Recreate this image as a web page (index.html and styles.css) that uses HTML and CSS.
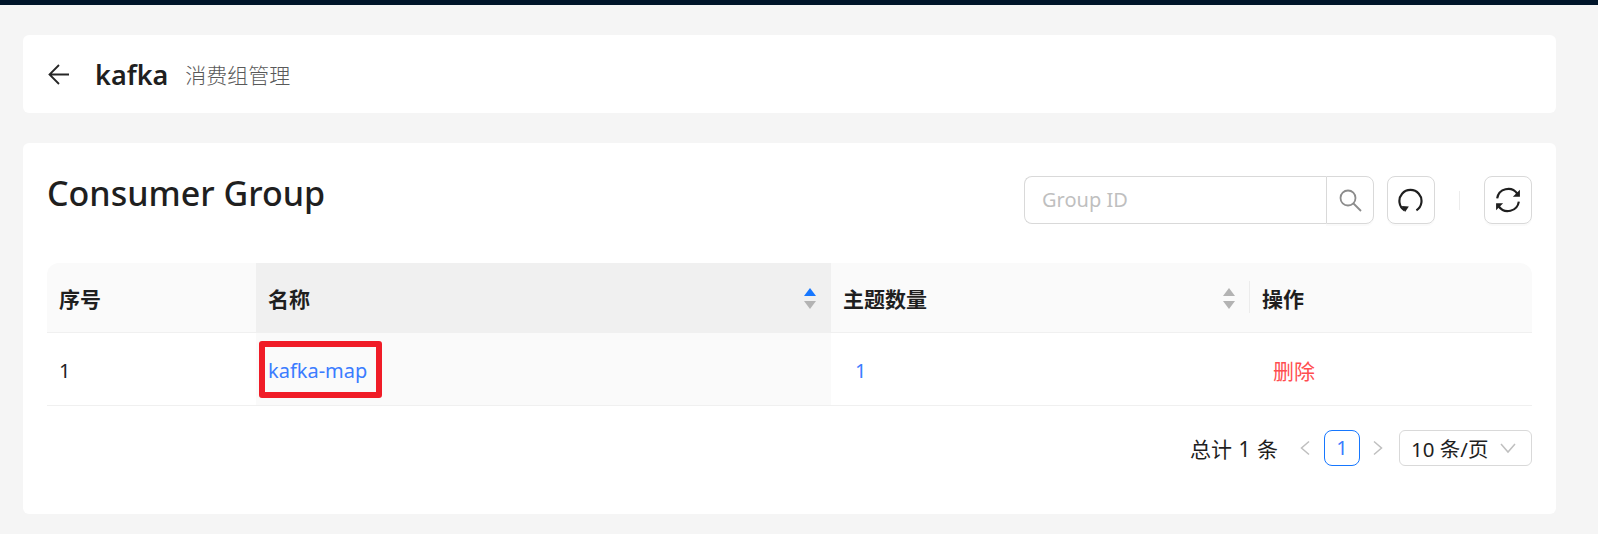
FILE: index.html
```html
<!DOCTYPE html>
<html lang="zh-CN">
<head>
<meta charset="utf-8">
<title>kafka 消费组管理</title>
<link rel="stylesheet" href="styles.css">
</head>
<body>
<div class="topbar"></div>
<main class="content">
  <section class="card page-header">
    <svg class="back" width="24" height="24" viewBox="0 0 24 24" fill="none" stroke="#262626" stroke-width="1.8"><path d="M22 12.500H2.500M12 3L2.500 12.500 12 22"/></svg>
    <span class="page-title">kafka</span>
    <span class="page-sub">消费组管理</span>
  </section>
  <section class="card main-card">
    <div class="toolbar">
      <h1 class="heading">Consumer Group</h1>
      <div class="tools">
        <div class="search">
          <div class="search-input">Group ID</div>
          <div class="search-btn">
            <svg width="24" height="24" viewBox="0 0 24 24" fill="none" stroke="#8c8c8c" stroke-width="1.800"><circle cx="10" cy="10" r="7.500"/><path d="M15.500 15.500L23 23"/></svg>
          </div>
        </div>
        <div class="icon-btn">
          <svg width="26" height="26" viewBox="0 0 24 24" fill="none" stroke="#1f1f1f" stroke-width="2"><path d="M6 21.500A10.200 10.200 0 1 1 17 21.500"/><path d="M3.500 17.500l6.500 0.500-3.500 5z" fill="#1f1f1f" stroke="none"/></svg>
        </div>
        <span class="tool-divider"></span>
        <div class="icon-btn">
          <svg width="26" height="26" viewBox="0 0 24 24" fill="none" stroke="#1f1f1f" stroke-width="2"><path d="M2 10.500A10.300 10.300 0 0 1 20.500 6"/><path d="M22 13.500A10.300 10.300 0 0 1 3.500 18"/><path d="M23 2.500v6.500h-6.500z M1 21.500v-6.500h6.500z" fill="#1f1f1f" stroke="none"/></svg>
        </div>
      </div>
    </div>
    <table class="grid">
      <colgroup>
        <col class="c-index"><col class="c-name"><col class="c-count"><col>
      </colgroup>
      <thead>
        <tr>
          <th class="first">序号</th>
          <th class="sorted"><div class="th-inner">名称<span class="sorter"><i class="up active"></i><i class="down"></i></span></div></th>
          <th><div class="th-inner">主题数量<span class="sorter"><i class="up"></i><i class="down"></i></span></div><span class="th-split"></span></th>
          <th class="last">操作</th>
        </tr>
      </thead>
      <tbody>
        <tr>
          <td>1</td>
          <td class="sorted-cell"><a class="link">kafka-map</a><span class="callout"></span></td>
          <td><a class="link count">1</a></td>
          <td><a class="danger">删除</a></td>
        </tr>
      </tbody>
    </table>
    <div class="pager">
      <span class="total">总计 1 条</span>
      <svg class="arrow first-arrow" width="12" height="16" viewBox="0 0 12 16" fill="none" stroke="#bfbfbf" stroke-width="1.500"><path d="M10 1.500L2.500 8l7.500 6.500"/></svg>
      <span class="page-num">1</span>
      <svg class="arrow" width="12" height="16" viewBox="0 0 12 16" fill="none" stroke="#bfbfbf" stroke-width="1.500"><path d="M2 1.500L9.500 8 2 14.500"/></svg>
      <div class="page-size"><span class="size-label">10 条/页</span>
        <svg width="16" height="12" viewBox="0 0 16 12" fill="none" stroke="#bfbfbf" stroke-width="1.500"><path d="M1 2l7 8 7-8"/></svg>
      </div>
    </div>
  </section>
</main>
</body>
</html>
```
FILE: styles.css
```css
* { box-sizing: border-box; }
html, body { margin: 0; height: 100%; }
body {
  background: #f5f5f5;
  color: #1f1f1f;
  font-family: "Noto Sans", "Noto Sans CJK SC", sans-serif;
  font-size: 20px;
  overflow: hidden;
}
.topbar { height: 5px; background: #00152a; }
.content { padding: 30px 42px 0 23px; display: flex; flex-direction: column; gap: 30px; }
.card { background: #fff; border-radius: 6px; }
.page-header {
  height: 78px;
  display: flex;
  align-items: center;
  padding: 0 24px;
}
.back { flex: none; margin-right: 24px; }
.page-title { font-size: 27px; font-weight: 600; margin-right: 17px; line-height: 1; }
.page-sub { font-size: 21px; color: #595959; font-family: "Noto Sans CJK SC", sans-serif; font-weight: 300; }
.main-card { height: 371px; padding: 33px 24px 0; }
.toolbar { display: flex; justify-content: space-between; align-items: flex-start; height: 87px; }
.heading { margin: 0; font-size: 34px; font-weight: 500; line-height: 34px; }
.tools { display: flex; align-items: center; }
.search { display: flex; width: 350px; height: 48px; }
.search-input {
  flex: 1;
  border: 1px solid #d9d9d9;
  border-right: 0;
  border-radius: 8px 0 0 8px;
  padding-left: 17px;
  color: #bfbfbf;
  line-height: 46px;
}
.search-btn {
  width: 48px;
  border: 1px solid #d9d9d9;
  border-radius: 0 8px 8px 0;
  display: flex;
  align-items: center;
  justify-content: center;
  box-shadow: 0 2px 0 rgba(0,0,0,.02);
}
.icon-btn {
  width: 48px;
  height: 48px;
  margin-left: 13px;
  border: 1px solid #d9d9d9;
  border-radius: 8px;
  display: flex;
  align-items: center;
  justify-content: center;
  box-shadow: 0 2px 0 rgba(0,0,0,.02);
}
.tool-divider { width: 1px; height: 19px; background: #ececec; margin: 0 11px 0 24px; }
.grid { width: 100%; border-collapse: separate; border-spacing: 0; table-layout: fixed; }
.c-index { width: 209px; }
.c-name { width: 575px; }
.c-count { width: 419px; }
.grid th {
  height: 70px;
  background: #fafafa;
  border-bottom: 1px solid #f0f0f0;
  padding: 1px 12px 0;
  text-align: left;
  font-weight: 700;
  font-size: 21px;
  font-family: "Noto Sans CJK SC", sans-serif;
  position: relative;
}
.grid th.first { border-top-left-radius: 12px; }
.grid th.last { border-top-right-radius: 12px; }
.grid th.sorted { background: #f0f0f0; }
.th-inner { display: flex; justify-content: space-between; align-items: center; }
.sorter { display: flex; flex-direction: column; gap: 5px; margin-right: 3px; }
.sorter i { display: block; width: 0; height: 0; border-left: 6.500px solid transparent; border-right: 6.500px solid transparent; }
.sorter .up { border-bottom: 8px solid #b3b3b3; }
.sorter .down { border-top: 8px solid #b3b3b3; }
.sorter .up.active { border-bottom-color: #1677ff; }
.th-split { position: absolute; right: 0; top: 18px; height: 32px; width: 1px; background: #ececec; }
.grid td {
  height: 73px;
  padding: 2px 12px 0;
  border-bottom: 1px solid #f0f0f0;
  position: relative;
  font-size: 20px;
}
.grid td.sorted-cell { background: #fafafa; }
.link { color: #3b7cff; }
.count { margin-left: 12px; }
.danger { color: #ff4d4f; margin-left: 11px; font-size: 21px; font-family: "Noto Sans CJK SC", sans-serif; font-weight: 400; }
.callout {
  position: absolute;
  left: 3px;
  top: 8px;
  width: 123px;
  height: 57px;
  border: 6px solid #f01c27;
  border-radius: 3px;
}
.pager { display: flex; align-items: center; justify-content: flex-end; margin-top: 24px; }
.total { margin-right: 21px; font-size: 21px; word-spacing: 1px; font-weight: 400; }
.first-arrow { margin-right: 13px; }
.page-num {
  width: 36px;
  height: 36px;
  border: 1px solid #1677ff;
  border-radius: 8px;
  color: #3b7cff;
  text-align: center;
  line-height: 34px;
  margin-right: 12px;
}
.page-size {
  width: 133px;
  height: 36px;
  margin-left: 15px;
  border: 1px solid #d9d9d9;
  border-radius: 6px;
  padding: 0 15px 0 11px;
  display: flex;
  align-items: center;
  justify-content: space-between;
}
.size-label { font-size: 20.500px; white-space: nowrap; }
```
